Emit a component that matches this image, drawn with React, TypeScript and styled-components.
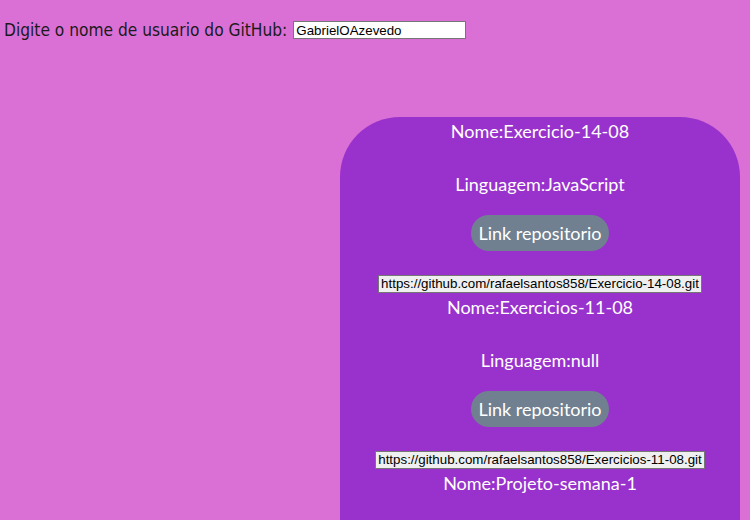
import React from 'react';
import styled, { createGlobalStyle } from 'styled-components';

const GlobalStyle = createGlobalStyle`
  html, body {
    margin: 0;
    padding: 0;
    background: #da70d6;
    overflow: hidden;
  }
`;

const Page = styled.div`
  width: 750px;
  height: 520px;
  overflow: hidden;
  background: #da70d6;
`;

const SearchBar = styled.div`
  display: flex;
  align-items: center;
  gap: 6px;
  padding: 20px 4px 0;
`;

const SearchLabel = styled.label`
  font-family: 'DejaVu Sans', sans-serif;
  font-stretch: condensed;
  font-size: 17.2px;
  line-height: 20px;
  color: #1a1a1a;
`;

const SearchInput = styled.input`
  box-sizing: border-box;
  width: 173px;
  height: 18px;
  padding: 0 2px;
  border: 1px solid #767676;
  background: #fff;
  font-family: 'Liberation Sans', Arial, sans-serif;
  font-size: 13.33px;
  color: #000;
  outline: none;
`;

const CardRow = styled.div`
  display: flex;
  justify-content: flex-end;
  padding-right: 10px;
  margin-top: 77px;
`;

const Card = styled.section`
  width: 400px;
  min-height: 420px;
  padding-top: 3px;
  background: #9932cc;
  border-radius: 60px 60px 0 0;
  font-family: Lato, 'Open Sans', sans-serif;
  font-size: 18px;
  color: #fff;
`;

const Repo = styled.div<{ $first?: boolean }>`
  display: flex;
  flex-direction: column;
  align-items: center;
  margin-top: ${p => (p.$first ? '0' : '3px')};
`;

const Name = styled.p`
  margin: 0;
  line-height: 22px;
`;

const Language = styled.p`
  margin: 31px 0 0;
  line-height: 22px;
`;

const LinkButton = styled.button`
  margin-top: 20px;
  height: 36px;
  padding: 0 7px;
  border: none;
  border-radius: 18px;
  background: #708090;
  color: #fff;
  font-family: Lato, 'Open Sans', sans-serif;
  font-size: 18px;
  cursor: pointer;
`;

const UrlBox = styled.span`
  margin-top: 24px;
  box-sizing: border-box;
  height: 18px;
  padding: 0 2px;
  border: 1px solid #767676;
  background: #efefef;
  font-family: 'Liberation Sans', Arial, sans-serif;
  font-size: 13.33px;
  line-height: 16px;
  color: #000;
  white-space: nowrap;
`;

const repos = [
  { name: 'Exercicio-14-08', language: 'JavaScript', url: 'https://github.com/rafaelsantos858/Exercicio-14-08.git' },
  { name: 'Exercicios-11-08', language: 'null', url: 'https://github.com/rafaelsantos858/Exercicios-11-08.git' },
  { name: 'Projeto-semana-1', language: 'JavaScript', url: 'https://github.com/rafaelsantos858/Projeto-semana-1.git' },
];

export default function App() {
  return (
    <Page>
      <GlobalStyle />
      <SearchBar>
        <SearchLabel htmlFor="user">Digite o nome de usuario do GitHub:</SearchLabel>
        <SearchInput id="user" defaultValue="GabrielOAzevedo" />
      </SearchBar>
      <CardRow>
        <Card>
          {repos.map((repo, i) => (
            <Repo key={repo.name} $first={i === 0}>
              <Name>Nome:{repo.name}</Name>
              <Language>Linguagem:{repo.language}</Language>
              <LinkButton>Link repositorio</LinkButton>
              <UrlBox>{repo.url}</UrlBox>
            </Repo>
          ))}
        </Card>
      </CardRow>
    </Page>
  );
}
